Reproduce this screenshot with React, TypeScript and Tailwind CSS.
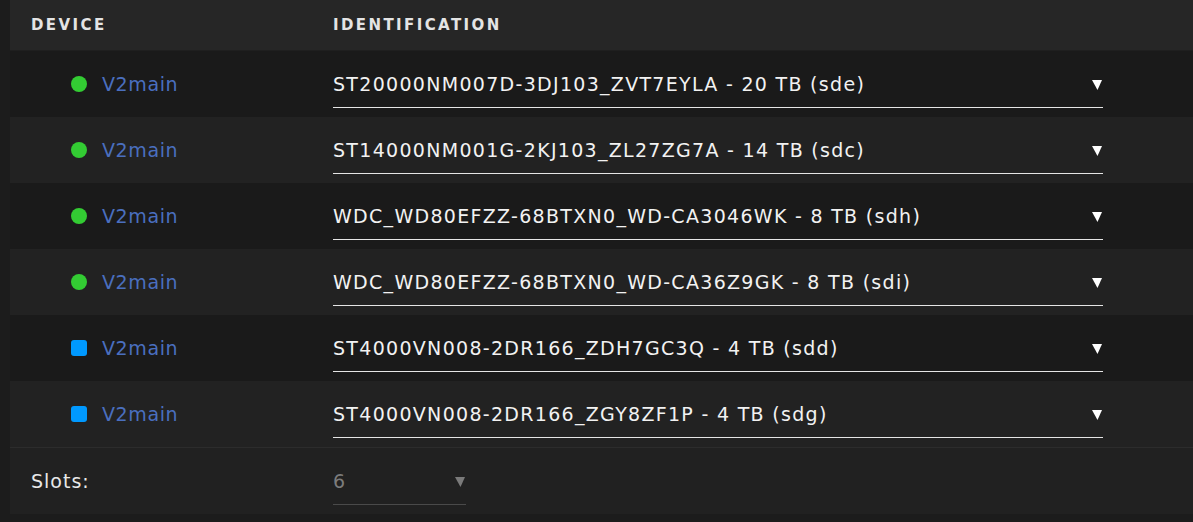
const disks = [
  { status: 'green', id: 'ST20000NM007D-3DJ103_ZVT7EYLA - 20 TB (sde)' },
  { status: 'green', id: 'ST14000NM001G-2KJ103_ZL27ZG7A - 14 TB (sdc)' },
  { status: 'green', id: 'WDC_WD80EFZZ-68BTXN0_WD-CA3046WK - 8 TB (sdh)' },
  { status: 'green', id: 'WDC_WD80EFZZ-68BTXN0_WD-CA36Z9GK - 8 TB (sdi)' },
  { status: 'blue', id: 'ST4000VN008-2DR166_ZDH7GC3Q - 4 TB (sdd)' },
  { status: 'blue', id: 'ST4000VN008-2DR166_ZGY8ZF1P - 4 TB (sdg)' },
];

const Arrow = ({ muted }: { muted?: boolean }) => (
  <svg width="10" height="10" viewBox="0 0 10 10" className="mt-[2px]">
    <polygon points="0,0 10,0 5.5,10" fill={muted ? '#7a7a7a' : '#ffffff'} />
  </svg>
);

export default function App() {
  return (
    <div
      className="w-[1193px] h-[522px] bg-[#1c1c1c] pl-[10px] overflow-hidden"
      style={{ fontFamily: '"DejaVu Sans", "Noto Sans", sans-serif' }}
    >
      {/* Header */}
      <div className="flex items-center h-[51px] bg-[#262626] border-b border-[#1f1f1f] text-[15px] font-bold tracking-[2.4px] text-[#e4e4e4]">
        <div className="w-[302px] pl-[21px]">DEVICE</div>
        <div className="pl-[21px]">IDENTIFICATION</div>
      </div>

      {/* Rows */}
      {disks.map((d, i) => (
        <div
          key={i}
          className={`flex items-start h-[66px] ${i % 2 === 0 ? 'bg-[#1a1a1a]' : 'bg-[#222222]'}`}
        >
          <div className="w-[323px] h-[48px] mt-[9px] flex items-center pl-[61px] gap-[15px]">
            {d.status === 'green' ? (
              <span className="w-[16px] h-[16px] rounded-full bg-[#33cc33]" />
            ) : (
              <span className="w-[16px] h-[16px] rounded-[3px] bg-[#0099ff]" />
            )}
            <span className="text-[19px] tracking-[0.6px] text-[#4a6fbf] pt-[1px]">V2main</span>
          </div>
          <div className="w-[770px] h-[48px] mt-[9px] flex items-center justify-between border-b border-[#e5e5e5] pr-[1px]">
            <span className="text-[19px] tracking-[1.3px] text-[#f2f2f2] pt-[2px]">{d.id}</span>
            <Arrow />
          </div>
        </div>
      ))}

      {/* Footer */}
      <div className="flex items-start h-[67px] bg-[#212121] border-t border-[#2c2c2c]">
        <div className="w-[323px] h-[48px] mt-[9px] flex items-center pl-[21px] text-[19px] tracking-[1px] text-[#e8e8e8] pt-[1px]">Slots:</div>
        <div className="w-[133px] h-[48px] mt-[9px] flex items-center justify-between border-b border-[#4a4a4a] pr-[1px]">
          <span className="text-[19px] text-[#7c7c7c] pt-[1px]">6</span>
          <Arrow muted />
        </div>
      </div>
    </div>
  );
}
